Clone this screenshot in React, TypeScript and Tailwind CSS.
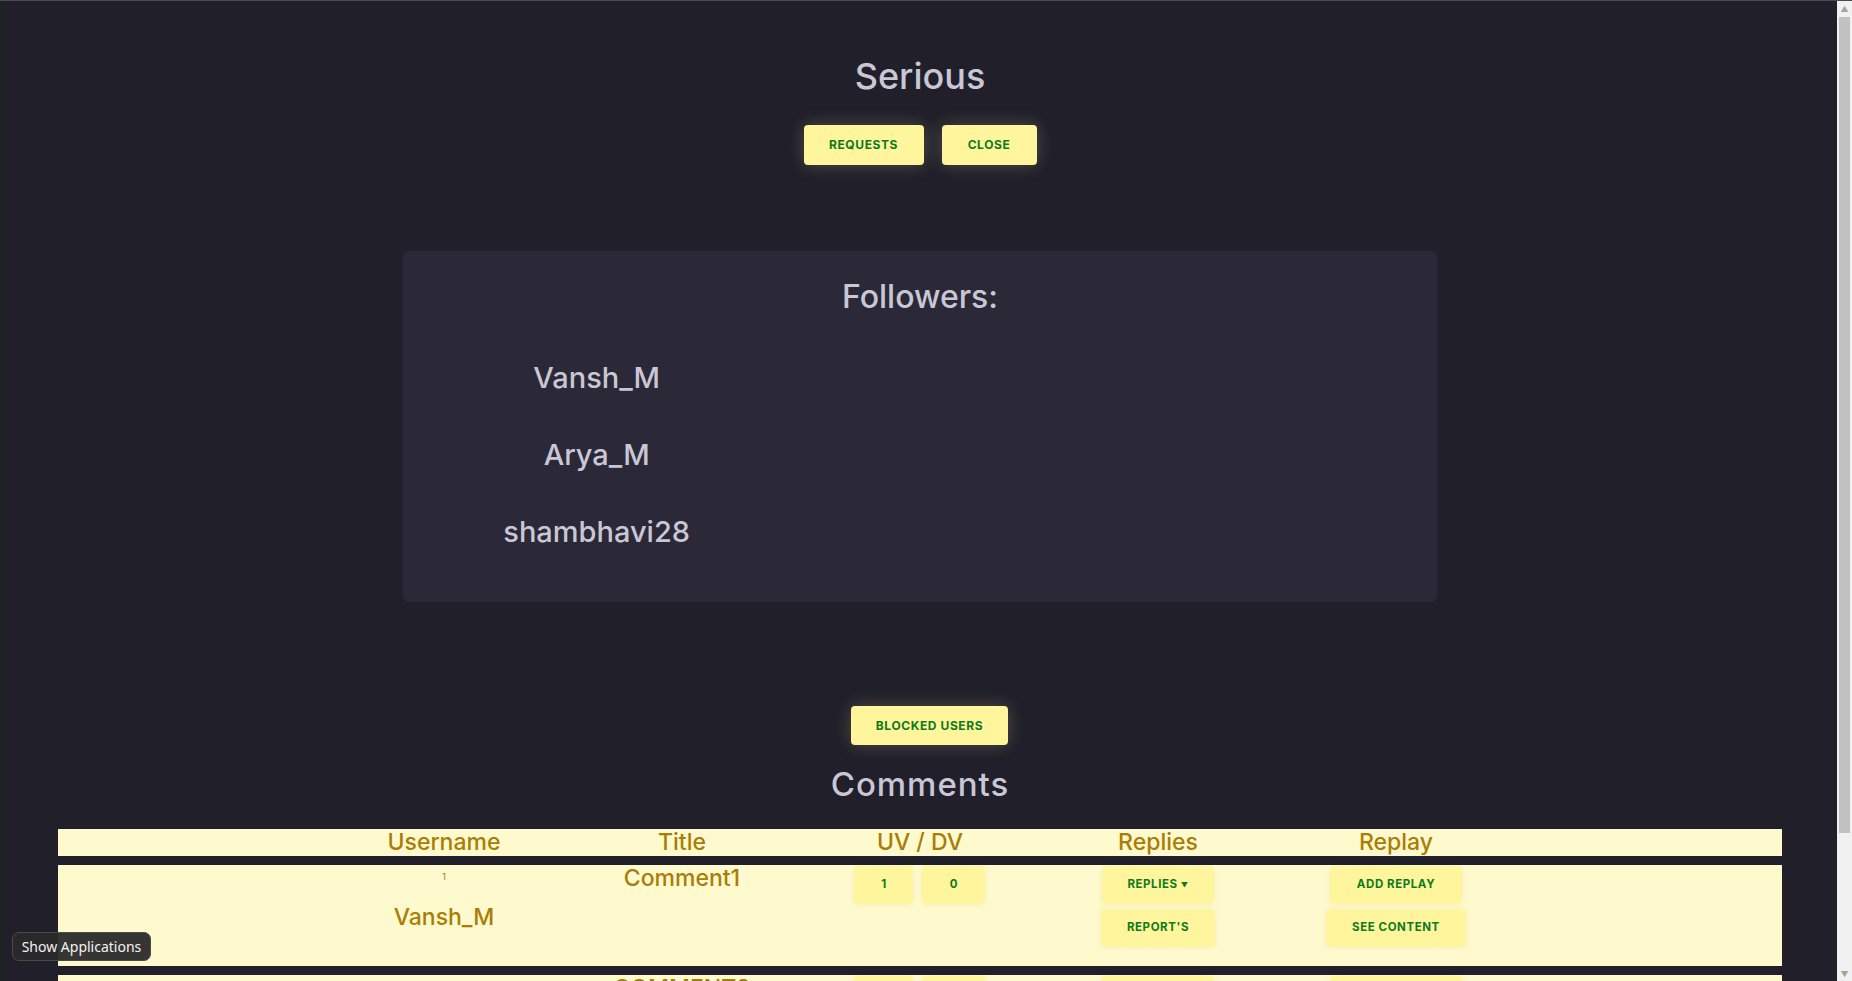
const followers = ['Vansh_M', 'Arya_M', 'shambhavi28'];

const headers = ['Username', 'Title', 'UV / DV', 'Replies', 'Replay'];

// small yellow action button used inside the comments table
const RowButton = ({ label, w, caret }: { label: string; w: string; caret?: boolean }) => (
  <button
    className={`${w} h-[38px] shrink-0 flex items-center justify-center gap-[3px] rounded-[4px] bg-[#fff59d] text-[#0f7a1c] text-[11.5px] font-bold tracking-[0.05em] shadow-[0_1px_6px_rgba(120,100,0,0.08)]`}
  >
    {label}
    {caret && <span className="text-[7px] leading-none mt-[1px]">▼</span>}
  </button>
);

const CommentRow = ({ index, user, title, up, down }: { index: number; user: string; title: string; up: number; down: number }) => (
  <div className="w-full h-[101px] shrink-0 bg-[#fffacd]">
    <div className="w-[1190px] mx-auto grid grid-cols-5 h-full">
      <div className="flex flex-col items-center text-[#a97d06]">
        <span className="text-[9px] leading-none mt-[7px]">{index}</span>
        <span className="text-[23px] leading-[27px] font-medium mt-[23px]">{user}</span>
      </div>
      <div className="flex justify-center text-[#a97d06]">
        <span className="text-[23px] leading-[27px] font-medium">{title}</span>
      </div>
      <div className="flex justify-center gap-[9px] pt-px">
        <RowButton label={String(up)} w="w-[59px]" />
        <RowButton label={String(down)} w="w-[63px]" />
      </div>
      <div className="flex flex-col items-center gap-[5px] pt-px">
        <RowButton label="REPLIES" w="w-[112px]" caret />
        <RowButton label="REPORT'S" w="w-[114px]" />
      </div>
      <div className="flex flex-col items-center gap-[5px] pt-px">
        <RowButton label="ADD REPLAY" w="w-[132px]" />
        <RowButton label="SEE CONTENT" w="w-[140px]" />
      </div>
    </div>
  </div>
);

export default function App() {
  return (
    <div
      className="relative h-[981px] w-full flex flex-col overflow-hidden bg-[#201f2a]"
      style={{ fontFamily: 'Inter, "Noto Sans", sans-serif' }}
    >
      {/* window top edge */}
      <div className="h-px shrink-0 bg-[#4b4b4b]" />

      <div className="flex flex-1 min-h-0">
        {/* desktop peeking on the left */}
        <div className="w-[3px] bg-[#1a2522]" />

        {/* page */}
        <main className="flex-1 min-w-0 overflow-hidden flex flex-col items-center text-[#c9c7d6] [&>*]:shrink-0">
          <h1 className="mt-[57px] text-[36px] leading-none font-medium">Serious</h1>

          <div className="mt-[31px] flex gap-[18px]">
            <button className="w-[120px] h-[40px] rounded-[4px] bg-[#fff59d] text-[#0f7a1c] text-[12px] font-bold tracking-[0.05em] shadow-[0_0_18px_rgba(255,245,170,0.22)]">
              REQUESTS
            </button>
            <button className="w-[95px] h-[40px] rounded-[4px] bg-[#fff59d] text-[#0f7a1c] text-[12px] font-bold tracking-[0.05em] shadow-[0_0_18px_rgba(255,245,170,0.22)]">
              CLOSE
            </button>
          </div>

          {/* Followers card */}
          <section className="mt-[86px] w-[1034px] h-[351px] rounded-[6px] bg-[#2b2937] px-8 pt-[30px]">
            <h2 className="text-center text-[32px] leading-none font-medium">Followers:</h2>
            <div className="mt-[50px] grid grid-cols-3 gap-y-[48px]">
              {followers.map((name) => (
                <div key={name} className="col-start-1 text-center text-[29px] leading-none font-medium">
                  {name}
                </div>
              ))}
            </div>
          </section>

          <button className="mt-[104px] ml-[19px] w-[157px] h-[39px] rounded-[4px] bg-[#fff59d] text-[#0f7a1c] text-[12px] font-bold tracking-[0.05em] shadow-[0_0_18px_rgba(255,245,170,0.22)]">
            BLOCKED USERS
          </button>

          <h2 className="mt-[23px] text-[33px] leading-none font-medium tracking-[0.03em]">Comments</h2>

          {/* Comments table */}
          <div className="mt-[28px] w-[94%] flex flex-col gap-[9px]">
            <div className="w-full h-[27px] bg-[#fffacd]">
              <div className="w-[1190px] mx-auto grid grid-cols-5">
                {headers.map((h) => (
                  <div key={h} className="text-center text-[23px] leading-[27px] font-medium text-[#a97d06]">
                    {h}
                  </div>
                ))}
              </div>
            </div>
            <CommentRow index={1} user="Vansh_M" title="Comment1" up={1} down={0} />
            <CommentRow index={2} user="Arya_M" title="COMMENT2" up={0} down={0} />
          </div>
        </main>

        {/* scrollbar */}
        <div className="w-[15px] flex flex-col bg-[#f1f1f1]">
          <div className="h-[15px] flex items-center justify-center text-[#a3a3a3] text-[8px] leading-none">▲</div>
          <div className="mx-[2px] mt-px h-[816px] bg-[#c1c1c1]" />
          <div className="flex-1" />
          <div className="h-[15px] flex items-center justify-center text-[#a3a3a3] text-[8px] leading-none">▼</div>
        </div>
      </div>

      {/* OS tooltip overlay */}
      <div
        className="absolute left-[12px] top-[932px] w-[139px] h-[29px] flex items-center justify-center rounded-[7px] border border-[#4a4a4a] bg-[#2a2a2a]/95 text-[#f2f2f2] text-[14px]"
        style={{ fontFamily: '"Noto Sans", "DejaVu Sans", sans-serif' }}
      >
        Show Applications
      </div>
    </div>
  );
}
